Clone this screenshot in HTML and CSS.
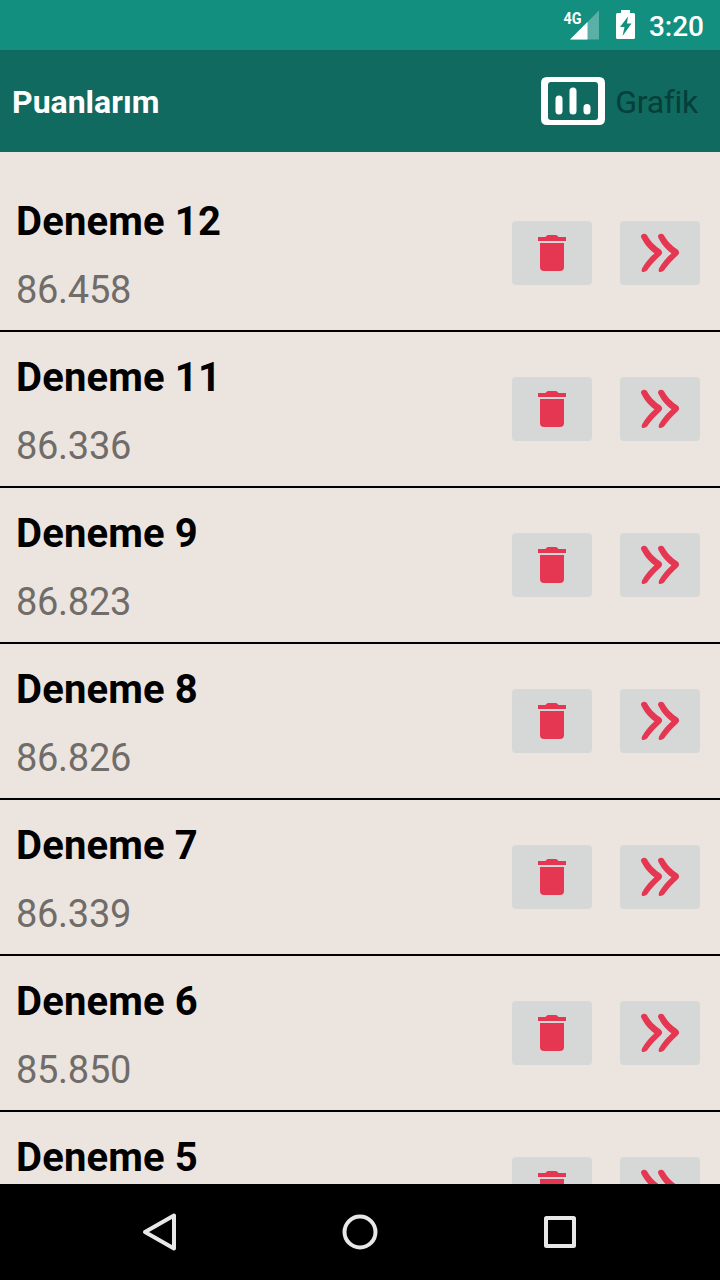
FILE: index.html
```html
<!DOCTYPE html>
<html lang="tr">
<head>
<meta charset="utf-8">
<title>Puanlarım</title>
<link rel="stylesheet" href="styles.css">
</head>
<body>
<svg class="defs" width="0" height="0" aria-hidden="true">
  <symbol id="trash" viewBox="0 0 80 64">
    <path d="M26 16h7.500c1-1.500 2-2 3.500-2h6c1.500 0 2.500.5 3.500 2H54v4H26zM28 22h24v24a4 4 0 0 1-4 4H32a4 4 0 0 1-4-4z"/>
  </symbol>
  <symbol id="forward" viewBox="0 0 80 64">
    <path id="chevron" d="M21 15.500C21.200 12.200 25.500 12 27 14.300C30.500 20.500 34.500 24.500 40.500 28.500Q43.500 31 41 34C36 38.500 31 43.500 27 49.500Q24.500 51.500 22 50.700Q21.300 49.500 22 47.500C25.500 41 30 36.500 34.500 32.200C28.500 28 25 23.500 21.600 17.200Q21 16.300 21 15.500z"/>
    <use href="#chevron" x="17"/>
  </symbol>
</svg>
<div class="screen">
  <div class="status">
    <svg class="signal" width="38" height="34" viewBox="0 0 38 34">
      <path d="M7 31.500L36 2.500V31.500z" fill="#fff" fill-opacity=".3"/>
      <path d="M7 31.500L24.500 14V31.500z" fill="#fff"/>
      <text class="network" x="0.500" y="15.500" textLength="18" lengthAdjust="spacingAndGlyphs">4G</text>
    </svg>
    <svg class="battery" width="19" height="30" viewBox="0 0 19 30">
      <path fill="#fff" fill-rule="evenodd" d="M5 0h9v3h3.500q1.500 0 1.500 1.500v23q0 1.500-1.500 1.500h-16Q0 29 0 27.500v-23Q0 3 1.500 3H5zM12 6.500L4 17h4.500L6.500 26L15.500 13.500H11z"/>
    </svg>
    <span class="clock">3:20</span>
  </div>
  <header class="bar">
    <h1 class="heading">Puanlarım</h1>
    <div class="chart">
      <svg width="64" height="48" viewBox="0 0 64 48">
        <path fill="#fff" fill-rule="evenodd" d="M6 0h52q6 0 6 6v36q0 6-6 6H6q-6 0-6-6V6Q0 0 6 0zM10 5q-3 0-3 3v32q0 3 3 3h44q3 0 3-3V8q0-3-3-3z"/>
        <path d="M18 22v12M32 14v20M46 30.500v3.500" stroke="#fff" stroke-width="7" stroke-linecap="round"/>
      </svg>
      <span class="chart-label">Grafik</span>
    </div>
  </header>
  <main class="list">
    <div class="row"><div class="info"><div class="name">Deneme 12</div><div class="score">86.458</div></div><div class="actions"><svg class="button"><use href="#trash"/></svg><svg class="button"><use href="#forward"/></svg></div></div>
    <div class="row"><div class="info"><div class="name">Deneme 11</div><div class="score">86.336</div></div><div class="actions"><svg class="button"><use href="#trash"/></svg><svg class="button"><use href="#forward"/></svg></div></div>
    <div class="row"><div class="info"><div class="name">Deneme 9</div><div class="score">86.823</div></div><div class="actions"><svg class="button"><use href="#trash"/></svg><svg class="button"><use href="#forward"/></svg></div></div>
    <div class="row"><div class="info"><div class="name">Deneme 8</div><div class="score">86.826</div></div><div class="actions"><svg class="button"><use href="#trash"/></svg><svg class="button"><use href="#forward"/></svg></div></div>
    <div class="row"><div class="info"><div class="name">Deneme 7</div><div class="score">86.339</div></div><div class="actions"><svg class="button"><use href="#trash"/></svg><svg class="button"><use href="#forward"/></svg></div></div>
    <div class="row"><div class="info"><div class="name">Deneme 6</div><div class="score">85.850</div></div><div class="actions"><svg class="button"><use href="#trash"/></svg><svg class="button"><use href="#forward"/></svg></div></div>
    <div class="row"><div class="info"><div class="name">Deneme 5</div></div><div class="actions"><svg class="button"><use href="#trash"/></svg><svg class="button"><use href="#forward"/></svg></div></div>
  </main>
  <nav class="nav">
    <svg width="40" height="40" viewBox="0 0 40 40"><path d="M5 20L34 3.500V36.500z"/></svg>
    <svg width="40" height="40" viewBox="0 0 40 40"><circle cx="20" cy="20" r="15.500"/></svg>
    <svg width="40" height="40" viewBox="0 0 40 40"><rect x="6" y="6" width="28" height="28" rx=".5"/></svg>
  </nav>
</div>
</body>
</html>
```
FILE: styles.css
```css
* { box-sizing: border-box; }
body { margin: 0; font-family: Roboto, "Noto Sans", sans-serif; }
.defs { display: block; }
.screen {
  width: 720px;
  height: 1280px;
  display: flex;
  flex-direction: column;
  overflow: hidden;
  background: #ece5df;
}
.status {
  height: 50px;
  flex: none;
  display: flex;
  justify-content: flex-end;
  align-items: flex-start;
  padding: 8px 16px 0 0;
  background: #138f80;
  color: #fff;
}
.network { font-size: 17px; font-weight: 700; fill: #fff; }
.battery { margin: 2px 14px 0 15px; }
.clock { font-size: 28px; font-weight: 500; line-height: 38px; }
.bar {
  height: 102px;
  flex: none;
  display: flex;
  justify-content: space-between;
  align-items: center;
  padding: 0 22px 0 12px;
  background: #106a5f;
}
.heading { margin: 0; padding-top: 2px; font-size: 32px; font-weight: 700; line-height: 38px; color: #fff; }
.chart { display: flex; align-items: center; gap: 10px; }
.chart-label { padding-top: 2px; font-size: 32px; line-height: 38px; letter-spacing: -0.3px; color: #063f39; }
.list { flex: 1; min-height: 0; overflow: hidden; padding-top: 24px; }
.row {
  height: 156px;
  display: flex;
  justify-content: space-between;
  padding: 22px 20px 0 16px;
  border-bottom: 2px solid #000;
}
.name { font-size: 40px; font-weight: 700; line-height: 47px; letter-spacing: 0.15px; color: #000; }
.score { margin-top: 23px; font-size: 38px; line-height: 44px; letter-spacing: -0.3px; color: #706c69; }
.actions { display: flex; gap: 28px; padding-top: 23px; }
.button {
  width: 80px;
  height: 64px;
  border-radius: 4px;
  background: #d6d8d7;
  fill: #e53652;
}
.nav {
  height: 96px;
  flex: none;
  display: flex;
  justify-content: center;
  align-items: center;
  gap: 160px;
  background: #000;
}
.nav svg { fill: none; stroke: #e8e8e8; stroke-width: 4; stroke-linejoin: round; }
```
